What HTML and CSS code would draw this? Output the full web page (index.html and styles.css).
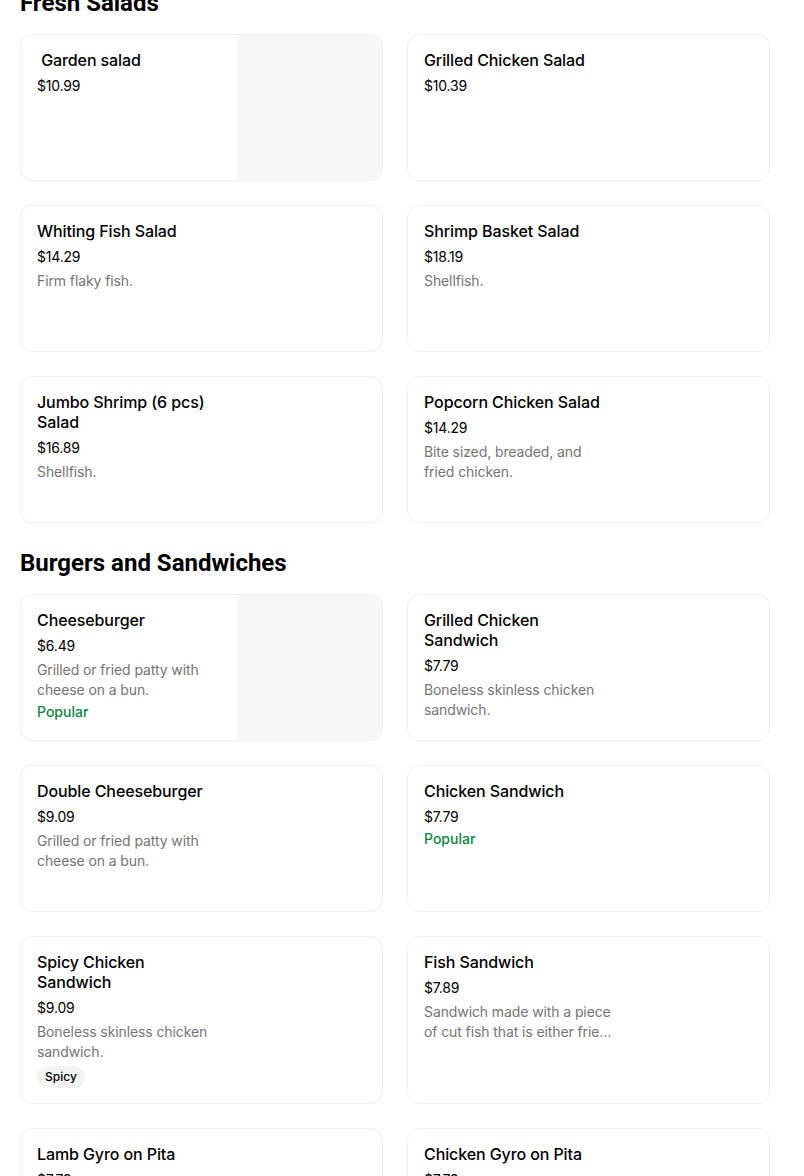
FILE: index.html
```html
<!DOCTYPE html>
<html lang="en">
<head>
<meta charset="utf-8">
<title>Menu</title>
<link rel="stylesheet" href="styles.css">
</head>
<body>
<main class="menu">
  <section class="section">
    <h2 class="section-title">Fresh Salads</h2>
    <div class="grid">
      <div class="card has-image">
        <div class="info">
          <div class="name">&nbsp;Garden salad</div>
          <div class="price">$10.99</div>
        </div>
        <div class="thumb"></div>
      </div>
      <div class="card">
        <div class="info">
          <div class="name">Grilled Chicken Salad</div>
          <div class="price">$10.39</div>
        </div>
      </div>
      <div class="card">
        <div class="info">
          <div class="name">Whiting Fish Salad</div>
          <div class="price">$14.29</div>
          <div class="desc">Firm flaky fish.</div>
        </div>
      </div>
      <div class="card">
        <div class="info">
          <div class="name">Shrimp Basket Salad</div>
          <div class="price">$18.19</div>
          <div class="desc">Shellfish.</div>
        </div>
      </div>
      <div class="card">
        <div class="info">
          <div class="name">Jumbo Shrimp (6 pcs) Salad</div>
          <div class="price">$16.89</div>
          <div class="desc">Shellfish.</div>
        </div>
      </div>
      <div class="card">
        <div class="info">
          <div class="name">Popcorn Chicken Salad</div>
          <div class="price">$14.29</div>
          <div class="desc">Bite sized, breaded, and fried chicken.</div>
        </div>
      </div>
    </div>
  </section>

  <section class="section">
    <h2 class="section-title">Burgers and Sandwiches</h2>
    <div class="grid">
      <div class="card has-image">
        <div class="info">
          <div class="name">Cheeseburger</div>
          <div class="price">$6.49</div>
          <div class="desc">Grilled or fried patty with cheese on a bun.</div>
          <div class="popular">Popular</div>
        </div>
        <div class="thumb"></div>
      </div>
      <div class="card">
        <div class="info">
          <div class="name">Grilled Chicken Sandwich</div>
          <div class="price">$7.79</div>
          <div class="desc">Boneless skinless chicken sandwich.</div>
        </div>
      </div>
      <div class="card">
        <div class="info">
          <div class="name">Double Cheeseburger</div>
          <div class="price">$9.09</div>
          <div class="desc">Grilled or fried patty with cheese on a bun.</div>
        </div>
      </div>
      <div class="card">
        <div class="info">
          <div class="name">Chicken Sandwich</div>
          <div class="price">$7.79</div>
          <div class="popular">Popular</div>
        </div>
      </div>
      <div class="card">
        <div class="info">
          <div class="name">Spicy Chicken Sandwich</div>
          <div class="price">$9.09</div>
          <div class="desc">Boneless skinless chicken sandwich.</div>
          <div class="tags"><span class="tag">Spicy</span></div>
        </div>
      </div>
      <div class="card">
        <div class="info">
          <div class="name">Fish Sandwich</div>
          <div class="price">$7.89</div>
          <div class="desc clamp">Sandwich made with a piece of cut fish that is either fried or grilled.</div>
        </div>
      </div>
      <div class="card">
        <div class="info">
          <div class="name">Lamb Gyro on Pita</div>
          <div class="price">$7.79</div>
        </div>
      </div>
      <div class="card">
        <div class="info">
          <div class="name">Chicken Gyro on Pita</div>
          <div class="price">$7.79</div>
        </div>
      </div>
    </div>
  </section>
</main>
</body>
</html>
```

FILE: styles.css
```css
html, body {
  margin: 0;
  padding: 0;
  background: #ffffff;
}

body {
  font-family: Inter, "Noto Sans", "Liberation Sans", sans-serif;
  color: #000000;
  overflow: hidden;
}

.menu {
  width: 750px;
  margin: -13px 0 0 20px;
}

.section + .section {
  margin-top: 24px;
}

.section-title {
  margin: 0 0 15px;
  font-family: Roboto, "Liberation Sans", sans-serif;
  font-size: 24px;
  line-height: 32px;
  font-weight: 700;
  letter-spacing: 0;
}

.grid {
  display: grid;
  grid-template-columns: 363px 363px;
  column-gap: 24px;
  row-gap: 24px;
}

.card {
  display: flex;
  min-height: 147px;
  box-sizing: border-box;
  border: 1px solid #f0f0f0;
  border-radius: 12px;
  overflow: hidden;
  background: #ffffff;
}

.info {
  padding: 15px 10px 15px 16px;
  width: 190px;
  flex: none;
}

.thumb {
  margin-left: auto;
  width: 145px;
  flex: none;
  background: #f7f7f7;
}

.name {
  max-width: 180px;
  font-size: 16px;
  line-height: 20px;
  font-weight: 500;
  color: #000000;
  letter-spacing: -0.1px;
}

.price {
  margin-top: 6px;
  font-size: 14px;
  line-height: 20px;
  color: #000000;
  letter-spacing: -0.2px;
}

.desc {
  margin-top: 4px;
  font-size: 14px;
  line-height: 20px;
  color: #757575;
  letter-spacing: -0.1px;
}

.clamp {
  display: -webkit-box;
  -webkit-line-clamp: 2;
  -webkit-box-orient: vertical;
  overflow: hidden;
}

.popular {
  margin-top: 2px;
  font-size: 14px;
  line-height: 20px;
  font-weight: 500;
  color: #0e8345;
}

.tags {
  margin-top: 4px;
  display: flex;
}

.tag {
  display: inline-block;
  padding: 0 8px;
  height: 22px;
  line-height: 22px;
  border-radius: 11px;
  background: #f3f3f3;
  font-size: 12px;
  font-weight: 500;
  color: #000000;
}
```
